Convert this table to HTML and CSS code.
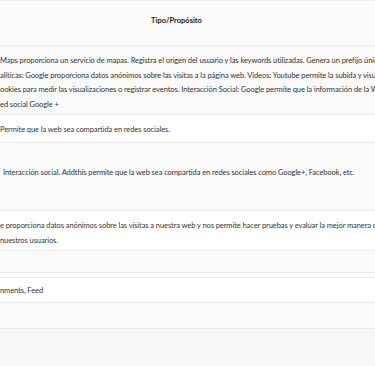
FILE: index.html
```html
<!DOCTYPE html>
<html lang="es">
<head>
<meta charset="utf-8">
<title>Cookies</title>
<link rel="stylesheet" href="styles.css">
</head>
<body>
<div class="scroller">
  <div class="table">
    <div class="row head"><div class="cell th">Tipo/Propósito</div></div>
    <div class="row shade r1">
      <div class="cell">
        <div class="line">Maps proporciona un servicio de mapas. Registra el origen del usuario y las keywords utilizadas. Genera un prefijo único</div>
        <div class="line">alíticas: Google proporciona datos anónimos sobre las visitas a la página web. Videos: Youtube permite la subida y visualización</div>
        <div class="line">ookies para medir las visualizaciones o registrar eventos. Interacción Social: Google permite que la información de la Web</div>
        <div class="line">ed social Google +</div>
      </div>
    </div>
    <div class="row r2"><div class="cell"><div class="line">Permite que la web sea compartida en redes sociales.</div></div></div>
    <div class="row shade r3">
      <div class="cell">
        <div class="line">&nbsp;</div>
        <div class="line indent">Interacción social. Addthis permite que la web sea compartida en redes sociales como Google+, Facebook, etc.</div>
        <div class="line">&nbsp;</div>
        <div class="line">&nbsp;</div>
      </div>
    </div>
    <div class="row r4">
      <div class="cell">
        <div class="line">e proporciona datos anónimos sobre las visitas a nuestra web y nos permite hacer pruebas y evaluar la mejor manera de</div>
        <div class="line">nuestros usuarios.</div>
      </div>
    </div>
    <div class="row shade r5"><div class="cell"><div class="line">&nbsp;</div></div></div>
    <div class="row r6"><div class="cell"><div class="line">nments, Feed</div></div></div>
    <div class="row shade r7"><div class="cell"><div class="line">&nbsp;</div></div></div>
    <div class="foot"></div>
  </div>
</div>
</body>
</html>
```
FILE: styles.css
```css
* { box-sizing: border-box; }
html, body { margin: 0; padding: 0; background: #ffffff; }
body {
  font-family: Lato, "Liberation Sans", sans-serif;
  color: #333333;
  font-size: 7.5px;
  letter-spacing: -0.08px;
}
.scroller {
  width: 375px;
  height: 366px;
  overflow: hidden;
}
.table {
  display: flex;
  flex-direction: column;
}
.row {
  border-bottom: 1px solid #ececec;
  background: #ffffff;
  overflow: hidden;
}
.row.shade { background: #fafafa; }
.cell {
  padding: 8px 0 2px 0;
  line-height: 14.5px;
}
.line {
  white-space: nowrap;
  overflow: hidden;
}
.indent { padding-left: 3px; }
.head {
  height: 46px;
  background: #fbfbfb;
  border-top: 1px solid #f0f0f0;
}
.th {
  padding-top: 13px;
  padding-left: 0;
  width: 353px;
  text-align: center;
  font-weight: 700;
  letter-spacing: 0;
  color: #222222;
}
.r1 { height: 69px; }
.r2 { height: 28px; }
.r3 { height: 68px; }
.r4 { height: 40px; }
.r5 { height: 22px; margin-bottom: 4px; }
.r6 { height: 26px; border-top: 1px solid #ececec; }
.r6 .cell { padding-top: 6px; }
.r7 { height: 26px; }
.foot {
  height: 40px;
  background: #f7f7f7;
}
```
